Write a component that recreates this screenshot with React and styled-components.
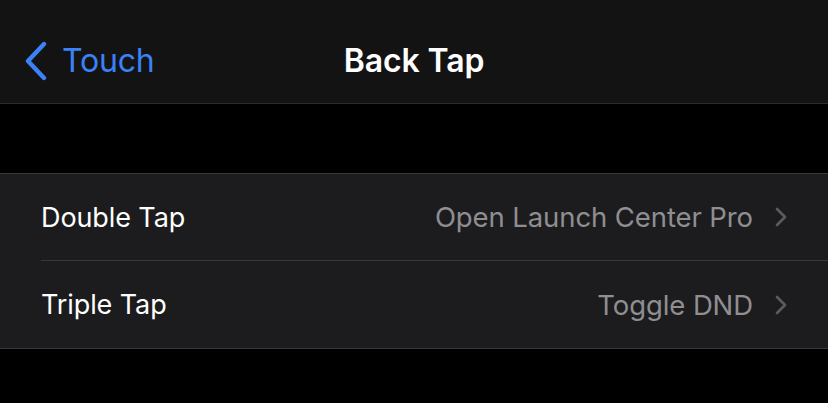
import React from 'react';
import styled, { createGlobalStyle } from 'styled-components';

const Global = createGlobalStyle`
  html, body {
    margin: 0;
    padding: 0;
    background: #000;
  }
  body {
    font-family: Inter, "Noto Sans", sans-serif;
    -webkit-font-smoothing: antialiased;
  }
`;

const Screen = styled.div`
  width: 828px;
  height: 403px;
  background: #000;
  overflow: hidden;
`;

const NavBar = styled.div`
  position: relative;
  height: 103px;
  background: #131313;
  border-bottom: 1px solid #2b2b2d;
  display: flex;
  align-items: center;
  justify-content: center;
`;

const BackButton = styled.div`
  position: absolute;
  left: 24px;
  top: 0;
  bottom: 0;
  display: flex;
  align-items: center;
  gap: 14px;
  color: #3b82f7;
  font-size: 32px;
  letter-spacing: -0.2px;
  padding-top: 18px;
`;

const Title = styled.div`
  color: #fff;
  font-size: 32px;
  font-weight: 600;
  letter-spacing: -0.1px;
  padding-top: 18px;
`;

const Spacer = styled.div`
  height: 69px;
`;

const Group = styled.div`
  background: #1c1c1e;
  border-top: 1px solid #38383a;
  border-bottom: 1px solid #38383a;
  padding-left: 41px;
`;

const Row = styled.div`
  height: ${p => p.$h}px;
  display: flex;
  align-items: center;
  padding-right: 41px;
  border-bottom: ${p => (p.$last ? 'none' : '1px solid #38383a')};
`;

const Label = styled.div`
  flex: 1;
  color: #fff;
  font-size: 27px;
  letter-spacing: -0.1px;
`;

const Value = styled.div`
  color: #8e8e93;
  font-size: 27.5px;
  letter-spacing: -0.1px;
  margin-right: 22px;
`;

const Chevron = () => (
  <svg width="12" height="20" viewBox="0 0 12 20">
    <path d="M2 2 L10 10 L2 18" fill="none" stroke="#5b5b5f" strokeWidth="2.6" strokeLinecap="round" strokeLinejoin="round" />
  </svg>
);

const BackChevron = () => (
  <svg width="24" height="40" viewBox="0 0 24 40">
    <path d="M20 3 L4 20 L20 37" fill="none" stroke="#3b82f7" strokeWidth="4.4" strokeLinecap="round" strokeLinejoin="round" />
  </svg>
);

const rows = [
  { label: 'Double Tap', value: 'Open Launch Center Pro', h: 86 },
  { label: 'Triple Tap', value: 'Toggle DND', h: 87 },
];

export default function App() {
  return (
    <Screen>
      <Global />
      <NavBar>
        <BackButton>
          <BackChevron />
          <span>Touch</span>
        </BackButton>
        <Title>Back Tap</Title>
      </NavBar>
      <Spacer />
      <Group>
        {rows.map((r, i) => (
          <Row key={r.label} $h={r.h} $last={i === rows.length - 1}>
            <Label>{r.label}</Label>
            <Value>{r.value}</Value>
            <Chevron />
          </Row>
        ))}
      </Group>
    </Screen>
  );
}
